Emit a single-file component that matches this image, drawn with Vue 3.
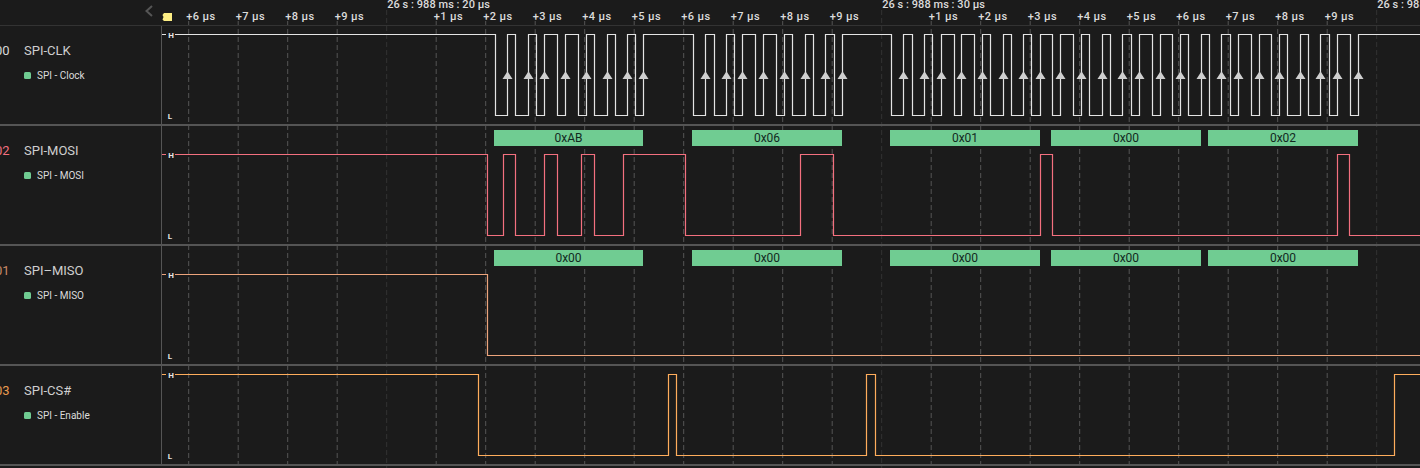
<script setup>
import { computed } from 'vue'

const X_START = 162
const X_END = 1420

// timestamps of level changes, in screen px
const clkEdges = [
  495.7, 507.7, 515.7, 528.7, 536.3, 544.7, 557.7, 565.7, 578, 586.7, 594.7, 607, 615.7, 627.7, 635.7, 643.7,
  693.3, 705.7, 714.3, 726.7, 734.3, 742.3, 755.7, 763.3, 776.7, 784.3, 792.3, 805, 813.3, 825.7, 834, 842.7,
  891.7, 903.3, 912.7, 924.3, 932.7, 941.3, 954.7, 961.7, 974.3, 982.3, 990.7, 1003.3, 1011.7, 1023.7, 1031.7, 1040.3,
  1052.7, 1060.7, 1073.7, 1081.3, 1089.7, 1102.7, 1110.7, 1122.7, 1131.7, 1139.7, 1152, 1160, 1172.7, 1180.3, 1188.3, 1201.7,
  1209.3, 1221.7, 1230, 1238.3, 1251, 1259, 1271.7, 1279.3, 1287.3, 1300.7, 1308.3, 1320.7, 1329, 1337.3, 1350, 1358.7,
]

const frames = [
  { x1: 494, x2: 643 },
  { x1: 692, x2: 842 },
  { x1: 890, x2: 1040 },
  { x1: 1051, x2: 1201 },
  { x1: 1208, x2: 1358 },
]

const withValues = (values) => frames.map((f, i) => ({ ...f, value: values[i] }))

const channels = [
  { id: '00', name: 'SPI-CLK', analyzer: 'SPI - Clock', color: '#e4e4e4', idColor: '#d8d8d8', height: 98, edges: clkEdges, arrows: true, frames: [] },
  {
    id: '02', name: 'SPI-MOSI', analyzer: 'SPI - MOSI', color: '#f4707f', idColor: '#f4707f', height: 118,
    edges: [487.3, 503.7, 515.3, 544.7, 557.3, 581.7, 594.3, 623.7, 685.7, 800.7, 833.3, 1040.8, 1052.7, 1337, 1349.5],
    frames: withValues(['0xAB', '0x06', '0x01', '0x00', '0x02']),
  },
  {
    id: '01', name: 'SPI–MISO', analyzer: 'SPI - MISO', color: '#eda47c', idColor: '#c98a68', height: 118,
    edges: [487.3],
    frames: withValues(['0x00', '0x00', '0x00', '0x00', '0x00']),
  },
  {
    id: '03', name: 'SPI-CS#', analyzer: 'SPI - Enable', color: '#ffad5c', idColor: '#e89a50', height: 98,
    edges: [478.3, 668.7, 676.7, 866.7, 875.7, 1394.5],
    frames: [],
  },
]

const rows = computed(() => channels.map((ch) => {
  const hi = ch.height - 89.5
  const lo = ch.height - 8.5
  let level = hi
  let d = `M${X_START} ${hi}`
  const rises = []
  for (const edge of ch.edges) {
    // keep the verticals on the pixel grid so they stay thin
    const x = Math.floor(edge) + 0.5
    d += `H${x}`
    level = level === hi ? lo : hi
    d += `V${level}`
    if (level === hi) rises.push(x)
  }
  d += `H${X_END}`
  return { ...ch, hi, lo, d, rises }
}))

const arrowPoints = (x, ch) => {
  const tip = ch.lo - 44.2
  return `${x - 5},${tip + 7.8} ${x + 5},${tip + 7.8} ${x},${tip}`
}

// one tick every 49.5px, every tenth is a labelled 10us mark
const micro = [6, 7, 8, 9, 0, 1, 2, 3, 4, 5, 6, 7, 8, 9, 0, 1, 2, 3, 4, 5, 6, 7, 8, 9, 0]
const majorText = ['26 s : 988 ms : 20 µs', '26 s : 988 ms : 30 µs', '26 s : 988 ms : 40 µs']
let majorIdx = 0
const ticks = micro.map((n, i) => {
  const x = 188.7 + 49.5 * i
  if (n === 0) return { x, major: true, label: majorText[majorIdx++] }
  return { x, major: false, label: `+${n} µs` }
})
</script>

<template>
  <div class="logic-view">
    <svg class="grid" width="1258" height="468" viewBox="162 0 1258 468">
      <template v-for="t in ticks" :key="t.x">
        <line
          :x1="t.x"
          :x2="t.x"
          :y1="t.major ? 10 : 21"
          y2="468"
          :class="t.major ? 'tick-major' : 'tick-minor'"
        />
        <text
          :x="t.major ? t.x + 0.5 : t.x - 2.5"
          :y="t.major ? 8 : 19.5"
          :class="t.major ? 'major-label' : 'tick-label'"
        >{{ t.label }}</text>
      </template>
      <polygon class="marker" points="164,13 172,13 172,21 164,21 162.5,19.5 163.5,17 162.5,15" />
    </svg>

    <div class="header">
      <div class="header-side">
        <svg width="8" height="12" viewBox="0 0 8 12">
          <polyline points="7,1 1.5,6 7,11" fill="none" stroke="#555" stroke-width="2" />
        </svg>
      </div>
    </div>

    <div v-for="row in rows" :key="row.id" class="row" :style="{ height: row.height + 'px' }">
      <div class="side">
        <div class="title">
          <span class="index" :style="{ color: row.idColor }">{{ row.id }}</span>
          <span class="name">{{ row.name }}</span>
        </div>
        <div class="analyzer">
          <i class="dot"></i>
          <span>{{ row.analyzer }}</span>
        </div>
      </div>
      <svg class="track" width="1258" :height="row.height" :viewBox="`162 0 1258 ${row.height}`">
        <path :d="row.d" fill="none" :stroke="row.color" stroke-width="1.2" />
        <template v-if="row.arrows">
          <polygon v-for="x in row.rises" :key="x" class="arrow" :points="arrowPoints(x, row)" />
        </template>
        <template v-for="f in row.frames" :key="f.x1">
          <rect class="frame" :x="f.x1" y="4" :width="f.x2 - f.x1" height="16" />
          <text class="frame-text" :x="(f.x1 + f.x2) / 2" y="16">{{ f.value }}</text>
        </template>
        <rect class="level-bg" x="166" :y="row.hi - 4" width="9" height="8" />
        <text class="level" x="171" :y="row.hi + 3">H</text>
        <text class="level" x="170" :y="row.lo + 3">L</text>
      </svg>
    </div>
  </div>
</template>

<style scoped>
.logic-view {
  position: relative;
  width: 1420px;
  height: 468px;
  overflow: hidden;
  background: #1b1b1b;
  font-family: Roboto, "Liberation Sans", sans-serif;
}

.grid {
  position: absolute;
  top: 0;
  left: 162px;
}

.tick-minor,
.tick-major {
  stroke-width: 1;
  stroke-dasharray: 5 3;
}

.tick-minor {
  stroke: #555;
}

.tick-major {
  stroke: #333;
}

.tick-label,
.major-label {
  fill: #dcdcdc;
  font-size: 11px;
  font-weight: 500;
}

.tick-label {
  letter-spacing: 0.4px;
}

.major-label {
  letter-spacing: 0.05px;
}

.marker {
  fill: #fdee84;
}

.header {
  position: relative;
  height: 26px;
  box-sizing: border-box;
  border-bottom: 1px solid #333;
}

.header-side {
  display: flex;
  justify-content: flex-end;
  width: 153px;
  padding-top: 5px;
}

.row {
  position: relative;
  display: flex;
  box-sizing: content-box;
  border-bottom: 2px solid #555;
}

.side {
  width: 162px;
  box-sizing: border-box;
  flex-shrink: 0;
  overflow: hidden;
  border-right: 1px solid #555;
  padding-top: 16px;
}

.title {
  display: flex;
  align-items: center;
  height: 16px;
  font-size: 13px;
  color: #cfcfcf;
}

.index {
  width: 29px;
  margin-left: -5px;
  flex-shrink: 0;
}

.analyzer {
  display: flex;
  align-items: center;
  gap: 6px;
  margin-top: 10px;
  margin-left: 24px;
  height: 14px;
  font-size: 10px;
  color: #dcdcdc;
}

.dot {
  width: 7px;
  height: 7px;
  border-radius: 1.5px;
  background: #70cc92;
}

.track {
  display: block;
  flex-shrink: 0;
}

.arrow {
  fill: #cfcfcf;
}

.frame {
  fill: #70cc92;
}

.frame-text {
  fill: #12291f;
  font-size: 12px;
  text-anchor: middle;
}

.level-bg {
  fill: #1b1b1b;
}

.level {
  fill: #e8e8e8;
  font-size: 8px;
  font-weight: 700;
  text-anchor: middle;
}
</style>
